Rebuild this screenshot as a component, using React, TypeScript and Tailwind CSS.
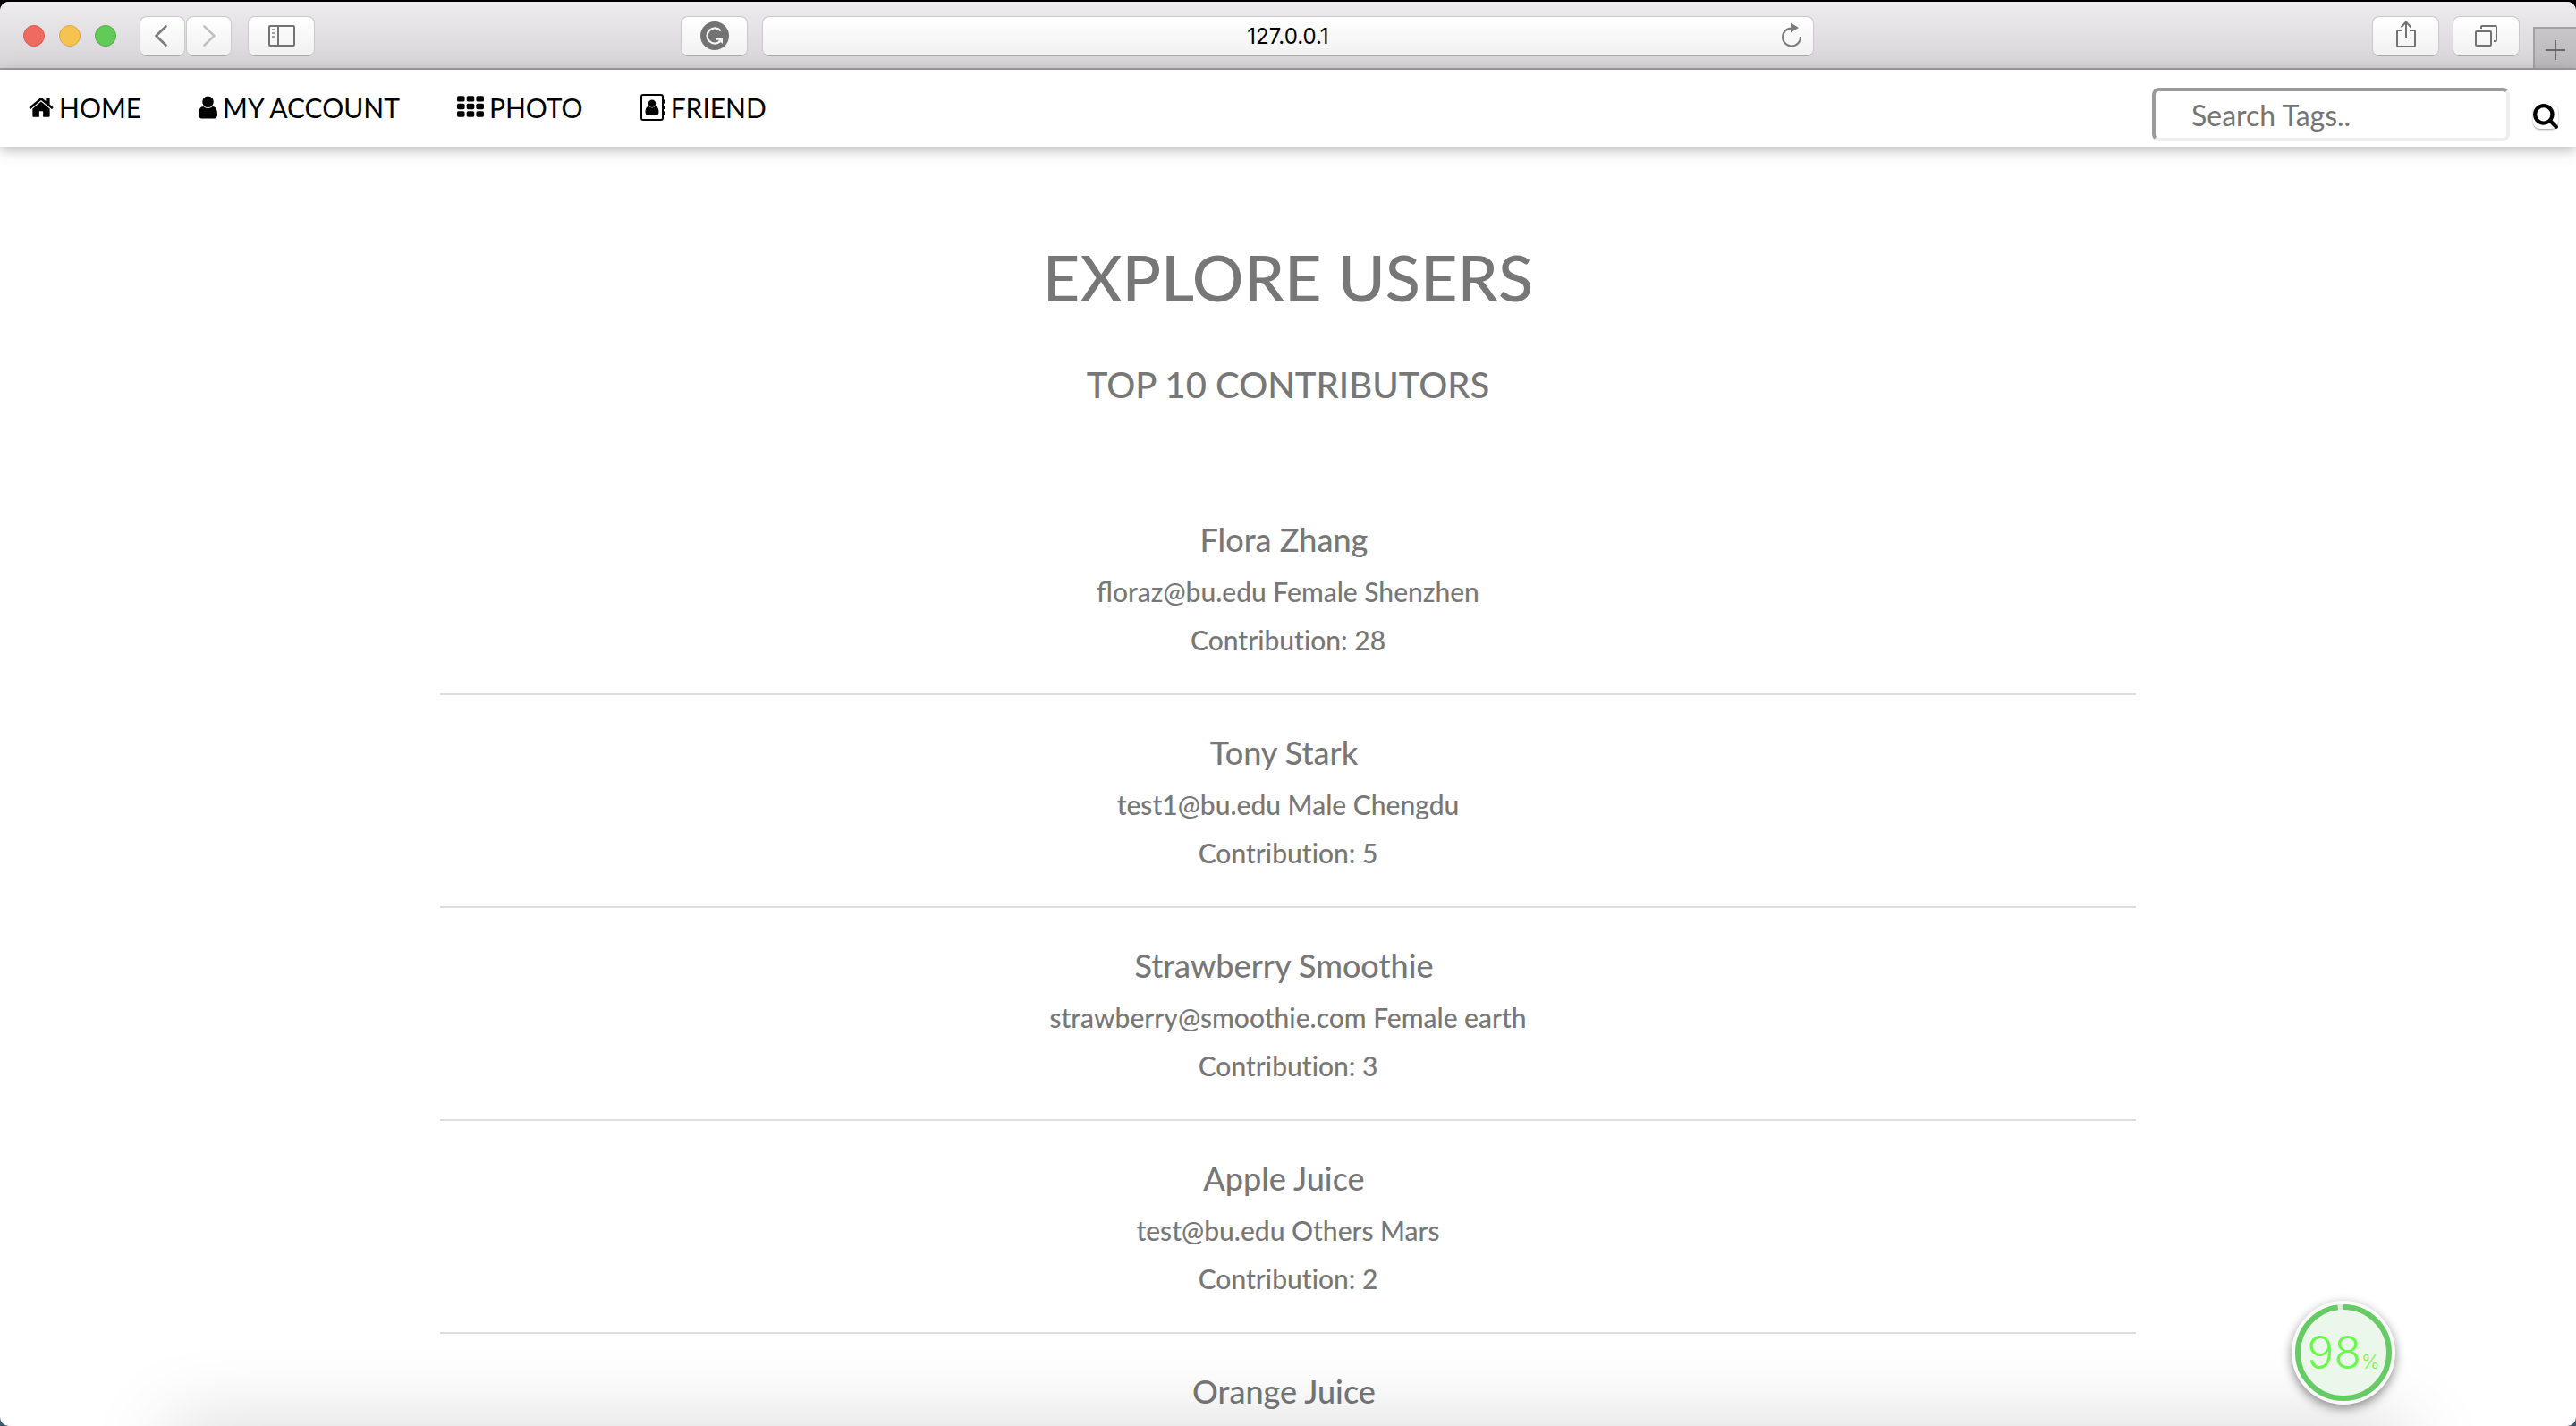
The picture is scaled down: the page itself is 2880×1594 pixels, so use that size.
import type { ReactNode } from "react";

type User = { name: string; info?: string; count?: number };

const users: User[] = [
  { name: "Flora Zhang", info: "floraz@bu.edu Female Shenzhen", count: 28 },
  { name: "Tony Stark", info: "test1@bu.edu Male Chengdu", count: 5 },
  { name: "Strawberry Smoothie", info: "strawberry@smoothie.com Female earth", count: 3 },
  { name: "Apple Juice", info: "test@bu.edu Others Mars", count: 2 },
  { name: "Orange Juice" },
];

function HomeIcon() {
  return (
    <svg viewBox="64 0 1664 1792" className="h-[30px] w-7" fill="currentColor" aria-hidden="true">
      <path d="M1472 992v480q0 26-19 45t-45 19h-384v-384h-256v384h-384q-26 0-45-19t-19-45v-480q0-1 .5-3t.5-3l575-474 575 474q1 2 1 6zm223-69l-62 74q-8 9-21 11h-3q-13 0-21-7l-692-577-692 577q-12 8-24 7-13-2-21-11l-62-74q-8-10-7-23.5t11-21.5l719-599q32-26 76-26t76 26l244 204v-195q0-14 9-23t23-9h192q14 0 23 9t9 23v408l219 182q10 8 11 21.5t-7 23.5z" />
    </svg>
  );
}

function UserIcon() {
  return (
    <svg viewBox="256 0 1280 1792" className="h-[30px] w-[21px]" fill="currentColor" aria-hidden="true">
      <path d="M1536 1399q0 109-62.5 187t-150.5 78h-854q-88 0-150.5-78t-62.5-187q0-85 8.5-160.5t31.5-152 58.5-131 94-89 134.5-34.5q131 128 313 128t313-128q76 0 134.5 34.5t94 89 58.5 131 31.5 152 8.5 160.5zm-256-887q0 159-112.5 271.5t-271.5 112.5-271.5-112.5-112.5-271.5 112.5-271.5 271.5-112.5 271.5 112.5 112.5 271.5z" />
    </svg>
  );
}

function GridIcon() {
  return (
    <svg viewBox="0 0 1792 1792" className="h-[30px] w-[30px]" fill="currentColor" aria-hidden="true">
      {[128, 640, 1152].map((y) =>
        [0, 640, 1280].map((x) => <rect key={`${x}-${y}`} x={x} y={y} width="512" height="384" rx="96" />),
      )}
    </svg>
  );
}

function AddressBookIcon() {
  return (
    <svg viewBox="0 0 28 30" className="h-[30px] w-7" aria-hidden="true">
      <rect x="1" y="1" width="24" height="28" rx="2" fill="none" stroke="currentColor" strokeWidth="2" />
      <path d="M25 6.5h2.2q.8 0 .8.8v2.4q0 .8-.8.8H25zM25 13h2.2q.8 0 .8.8v2.4q0 .8-.8.8H25zM25 19.500h2.200q.8 0 .8.8v2.400q0 .8-.8.8H25z" fill="currentColor" />
      <circle cx="13" cy="10.700" r="4.200" fill="currentColor" />
      <path d="M9.500 14q3.500 2.900 7 0c2.800 0 4 2.600 4 6.200 0 2-1 3.400-2.700 3.400H8.200c-1.700 0-2.700-1.400-2.700-3.400 0-3.600 1.200-6.200 4-6.200z" fill="currentColor" />
    </svg>
  );
}

function SearchIcon() {
  return (
    <svg viewBox="64 128 1664 1664" className="h-7 w-7" fill="currentColor" aria-hidden="true">
      <path d="M1216 832q0-185-131.5-316.5t-316.5-131.5-316.5 131.5-131.5 316.5 131.5 316.5 316.5 131.5 316.5-131.5 131.5-316.5zm512 832q0 52-38 90t-90 38q-54 0-90-38l-343-342q-179 124-399 124-143 0-273.5-55.5t-225-150-150-225-55.5-273.5 55.5-273.5 150-225 225-150 273.5-55.5 273.5 55.5 225 150 150 225 55.5 273.5q0 220-124 399l343 343q37 37 37 90z" />
    </svg>
  );
}

function ToolButton({ label, wide, children }: { label: string; wide?: boolean; children: ReactNode }) {
  return (
    <button
      type="button"
      aria-label={label}
      className={
        (wide ? "w-[75px]" : "w-[51px]") +
        " flex h-[45px] shrink-0 items-center justify-center rounded-lg border border-[#cbc9cb] border-b-[#a9a7a9] bg-linear-to-b from-white to-[#f1f1f1] text-[#737373]"
      }
    >
      {children}
    </button>
  );
}

function BrowserBar() {
  return (
    <header className="grid h-[76px] shrink-0 grid-cols-[1fr_1176px_1fr] border-b-2 border-[#a09ea0] bg-linear-to-b from-[#efecef] to-[#d5d3d6]">
      <div className="flex items-center pt-0.5 pr-4 pl-[26px]">
        <div className="flex gap-4">
          <button type="button" aria-label="Close" className="size-6 rounded-full border border-[#d9574c] bg-[#ed6b60]" />
          <button type="button" aria-label="Minimize" className="size-6 rounded-full border border-[#dba53f] bg-[#f6c351]" />
          <button type="button" aria-label="Zoom" className="size-6 rounded-full border border-[#4fae42] bg-[#62ca56]" />
        </div>
        <div className="ml-[26px] flex gap-px">
          <ToolButton label="Back">
            <svg viewBox="0 0 16 24" className="mr-1 h-6 w-4" fill="none" stroke="#7b7b7b" strokeWidth="2.600" strokeLinecap="round" strokeLinejoin="round">
              <path d="M13.500 1.500 2.500 12l11 10.500" />
            </svg>
          </ToolButton>
          <ToolButton label="Forward">
            <svg viewBox="0 0 16 24" className="h-6 w-4" fill="none" stroke="#c2c2c2" strokeWidth="2.600" strokeLinecap="round" strokeLinejoin="round">
              <path d="m2.500 1.500 11 10.500-11 10.500" />
            </svg>
          </ToolButton>
        </div>
        <div className="ml-[18px]">
          <ToolButton label="Show sidebar" wide>
            <svg viewBox="0 0 30 24" className="h-6 w-[30px]" fill="none" stroke="currentColor" strokeWidth="2">
              <rect x="1" y="1" width="28" height="22" rx="1" />
              <path d="M11 1v22" />
              <path d="M4 5h4M4 9h4M4 13h4" stroke="#a0a0a0" />
            </svg>
          </ToolButton>
        </div>
        <div className="ml-auto">
          <ToolButton label="Grammar check" wide>
            <svg viewBox="0 0 32 32" className="size-8">
              <circle cx="16" cy="16" r="16" fill="#737373" />
              <path d="M22.800 10.500A8.600 8.600 0 1 0 22.500 21.800" fill="none" stroke="#f5f5f5" strokeWidth="2.200" />
              <path d="M17.500 18.500H25V25l-2.300-2-1.500 1.200-1.400-1.800 1.200-1.600h-3.500z" fill="#f5f5f5" />
            </svg>
          </ToolButton>
        </div>
      </div>
      <div className="flex items-center pt-0.5">
        <div className="flex h-[45px] w-full items-center rounded-lg border border-[#cbc9cb] border-b-[#a9a7a9] bg-linear-to-b from-white to-[#f1f1f1] pr-3 pl-9">
          <input
            aria-label="Address"
            defaultValue="127.0.0.1"
            className="min-w-0 flex-1 bg-transparent pt-0.5 text-center font-['Inter',sans-serif] text-2xl text-black outline-none"
          />
          <button type="button" aria-label="Reload" className="pb-0.5 text-[#7b7b7b]">
            <svg viewBox="0 0 24 28" className="h-7 w-6" fill="none" stroke="currentColor" strokeWidth="2">
              <path d="M12 6.500A10 10 0 1 0 22 16" />
              <path d="M11 .5v11l9-5.500z" fill="currentColor" stroke="none" />
            </svg>
          </button>
        </div>
      </div>
      <div className="flex items-center justify-end gap-[15px] pt-0.5">
        <ToolButton label="Share" wide>
          <svg viewBox="0 0 24 32" className="mb-1 h-8 w-6" fill="none" stroke="currentColor" strokeWidth="2">
            <path d="M8 12H3q-1 0-1 1v16q0 1 1 1h18q1 0 1-1V13q0-1-1-1h-5M12 20V3M6.500 8.500 12 2.500l5.500 6" />
          </svg>
        </ToolButton>
        <ToolButton label="Show all tabs" wide>
          <svg viewBox="0 0 26 26" className="mr-0.5 size-[26px]" fill="none" stroke="currentColor" strokeWidth="2">
            <rect x="2" y="8" width="17" height="16" rx="1" />
            <path d="M8 5V3q0-1 1-1h15q1 0 1 1v15q0 1-1 1h-2" />
          </svg>
        </ToolButton>
        <button type="button" aria-label="New tab" className="flex h-[46px] w-12 items-center justify-center self-end border-t-2 border-l-2 border-[#a3a1a3] bg-linear-to-b from-[#c8c6c9] to-[#b9b7ba]">
          <svg viewBox="0 0 22 22" className="mt-1 size-[22px]" stroke="#6a686a" strokeWidth="2">
            <path d="M11 0v22M0 11h22" />
          </svg>
        </button>
      </div>
    </header>
  );
}

function NavLink({ icon, children }: { icon: ReactNode; children: ReactNode }) {
  return (
    <a href="#" className="flex items-center gap-1.5 px-8">
      {icon}
      <span className="leading-9">{children}</span>
    </a>
  );
}

function SiteNav() {
  return (
    <nav className="relative flex h-[86px] shrink-0 items-start justify-between bg-white text-[30px] text-black shadow-[0_4px_10px_rgba(0,0,0,0.16),0_4px_20px_rgba(0,0,0,0.12)]">
      <div className="flex pt-6">
        <NavLink icon={<HomeIcon />}>HOME</NavLink>
        <NavLink icon={<UserIcon />}>MY ACCOUNT</NavLink>
        <NavLink icon={<GridIcon />}>PHOTO</NavLink>
        <NavLink icon={<AddressBookIcon />}>FRIEND</NavLink>
      </div>
      <form className="flex items-center gap-[26px] pt-5 pr-5" onSubmit={(e) => e.preventDefault()}>
        <input
          type="text"
          aria-label="Search tags"
          placeholder="Search Tags.."
          className="h-[60px] w-[400px] rounded-lg border-4 border-t-[#9a9a9a] border-r-[#eeeeee] border-b-[#eeeeee] border-l-[#9a9a9a] bg-white pl-10 text-[32px] outline-none placeholder:text-[#757575]"
        />
        <button type="submit" aria-label="Search" className="mt-1 rounded-lg bg-white shadow-[0_1px_2px_rgba(0,0,0,0.4)]">
          <SearchIcon />
        </button>
      </form>
    </nav>
  );
}

function Battery() {
  return (
    <div className="absolute right-[202px] bottom-6 flex size-[116px] items-center justify-center rounded-full bg-[#fafcfa] shadow-[0_4px_12px_rgba(0,0,0,0.45)]">
      <svg viewBox="0 0 116 116" className="absolute inset-0 size-full" fill="none">
        <circle cx="58" cy="58" r="48" fill="#eaf7ea" />
        <circle cx="58" cy="58" r="51" stroke="#e3e6e3" strokeWidth="6" />
        <circle cx="58" cy="58" r="51" stroke="#67cb65" strokeWidth="6" pathLength="100" strokeDasharray="98 2" transform="rotate(-90 58 58)" />
      </svg>
      <div className="relative flex items-baseline font-['Inter',sans-serif] font-light text-[#6af84b]">
        <span className="text-[50px] leading-none">98</span>
        <span className="text-[22px] leading-none">%</span>
      </div>
    </div>
  );
}

export default function App() {
  return (
    <div className="h-screen overflow-hidden bg-linear-to-b from-black from-90% to-[#3f5870] pt-0.5 font-['Lato',sans-serif]">
      <div className="relative flex h-full flex-col overflow-hidden rounded-t-[10px] rounded-b-[10px] bg-white">
        <BrowserBar />
        <SiteNav />
        <main className="min-h-0 flex-1 overflow-hidden text-center font-medium text-[#777777]">
          <h1 className="mt-[91px] text-[72px] leading-[108px]">EXPLORE USERS</h1>
          <h2 className="mt-[37px] text-[40px] leading-[60px]">TOP 10 CONTRIBUTORS</h2>
          <ul className="mx-auto mt-[79px] w-[1896px] max-w-full">
            {users.map((user) => (
              <li key={user.name} className="border-b-2 border-[#dddddd] py-[33px]">
                <h3 className="text-4xl leading-[62px]">{user.name}&nbsp;</h3>
                {user.info && <p className="text-[30px] leading-[54px]">{user.info}</p>}
                {user.count && (
                  <p className="text-[30px] leading-[54px] [font-variant-ligatures:none]">Contribution: {user.count}</p>
                )}
              </li>
            ))}
          </ul>
        </main>
        <div className="pointer-events-none absolute top-full right-[190px] left-[190px] h-20 shadow-[0_0_90px_rgba(0,0,0,0.17)]" />
        <Battery />
      </div>
    </div>
  );
}
